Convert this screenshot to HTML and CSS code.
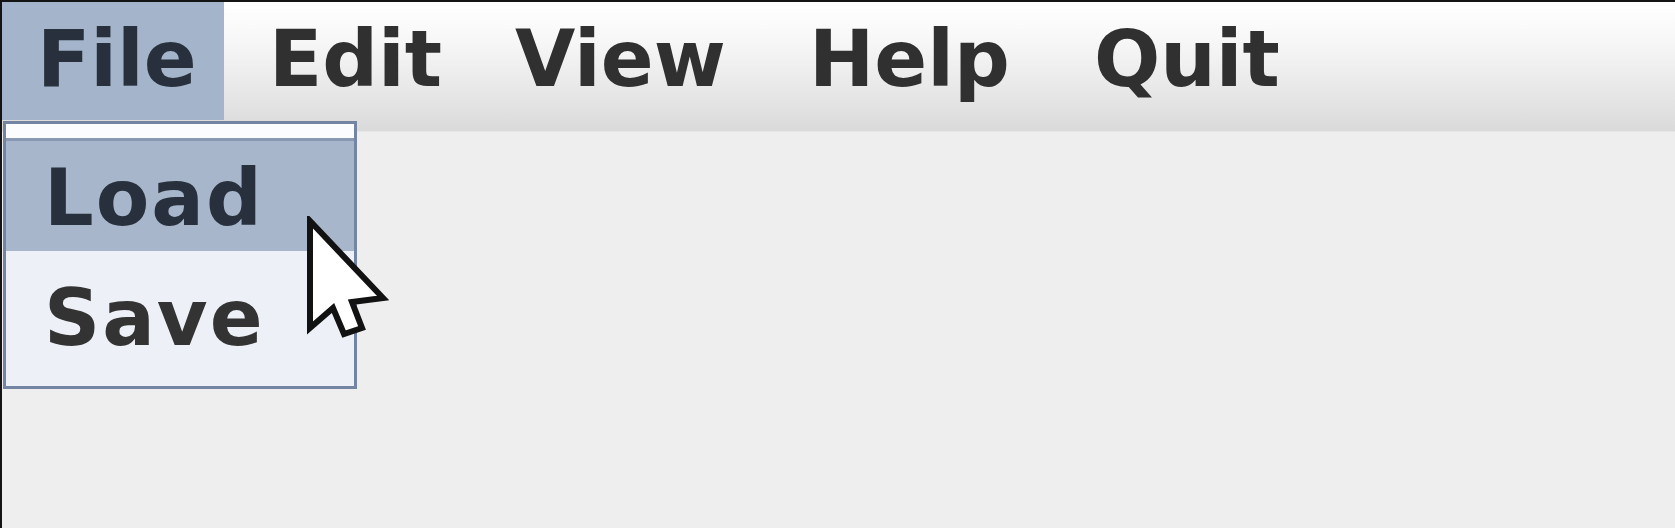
FILE: index.html
```html
<!DOCTYPE html>
<html>
<head>
<meta charset="utf-8">
<link rel="stylesheet" href="styles.css">
</head>
<body>
<div class="window">
  <div class="menubar">
    <div class="menu menu-file active">File</div>
    <div class="menu menu-edit">Edit</div>
    <div class="menu menu-view">View</div>
    <div class="menu menu-help">Help</div>
    <div class="menu menu-quit">Quit</div>
  </div>
  <div class="content"></div>
  <div class="popup">
    <div class="popup-top"></div>
    <div class="item selected">Load</div>
    <div class="item">Save</div>
  </div>
  <svg class="cursor" width="90" height="130" viewBox="0 0 90 130">
    <polygon points="5,5 5,112 28,92 39,118 57,112 47,86 78,82" fill="#ffffff" stroke="#121212" stroke-width="6" stroke-linejoin="miter"/>
  </svg>
</div>
</body>
</html>
```

FILE: styles.css
```css
html, body {
  margin: 0;
  padding: 0;
  background: #eeeeee;
}

.window {
  position: relative;
  width: 1675px;
  height: 528px;
  box-sizing: border-box;
  border-top: 2px solid #141414;
  border-left: 2px solid #141414;
  background: #eeeeee;
  overflow: hidden;
  font-family: "DejaVu Sans", "Liberation Sans", sans-serif;
  font-weight: bold;
  font-size: 78px;
  color: #303030;
}

.menubar {
  display: flex;
  height: 130px;
  box-sizing: border-box;
  padding-bottom: 11px;
  background: linear-gradient(#ffffff 0%, #f7f7f7 30%, #e3e3e3 80%, #dadada 100%);
  border-bottom: 1px solid #e6e6e6;
}

.menu {
  display: flex;
  align-items: center;
  box-sizing: border-box;
  padding: 0 0 4px 37px;
  line-height: 1;
}

.menu-file { width: 222px; padding-left: 35px; }
.menu-edit { width: 246px; margin-left: 8px; }
.menu-view { width: 294px; }
.menu-help { width: 285px; }

.menu.active {
  background: #a4b4cb;
  color: #27303c;
}

.content {
  height: 396px;
}

.popup {
  position: absolute;
  left: 1px;
  top: 119px;
  width: 354px;
  height: 268px;
  box-sizing: border-box;
  border: 3px solid #7485a3;
  background: #edf0f6;
  display: flex;
  flex-direction: column;
}

.popup-top {
  height: 14px;
  background: #fbfcfe;
  border-bottom: 3px solid #8898b3;
}

.item {
  display: flex;
  align-items: center;
  padding-left: 38px;
  line-height: 1;
  letter-spacing: 2px;
}

.item.selected {
  height: 110px;
  padding-top: 4px;
  box-sizing: border-box;
  background: #a7b6ca;
  color: #27303c;
}

.item:not(.selected) {
  flex: 1;
  color: #333333;
  padding-bottom: 2px;
}

.cursor {
  position: absolute;
  left: 303px;
  top: 214px;
}
```
